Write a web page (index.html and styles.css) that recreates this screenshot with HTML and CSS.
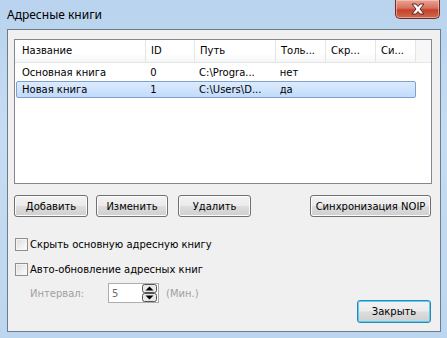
FILE: index.html
```html
<!DOCTYPE html>
<html>
<head>
<meta charset="utf-8">
<link rel="stylesheet" href="styles.css">
</head>
<body>
<div class="window">
  <div class="titlebar">
    <div class="title">Адресные книги</div>
    <div class="close">
      <svg width="18" height="12" viewBox="0 0 18 12"><path d="M3 1 L7 1 L9 3.5 L11 1 L15 1 L11 6 L15 11 L11 11 L9 8.5 L7 11 L3 11 L7 6 Z" fill="#fff" stroke="#5a2a26" stroke-width="1" stroke-linejoin="round"/></svg>
    </div>
  </div>
  <div class="client">
    <div class="listview">
      <div class="lv-row lv-header">
        <div class="c c1">Название</div>
        <div class="c c2">ID</div>
        <div class="c c3">Путь</div>
        <div class="c c4">Толь...</div>
        <div class="c c5">Скр...</div>
        <div class="c c6">Си...</div>
        <div class="c c7"></div>
      </div>
      <div class="lv-row item">
        <div class="c c1">Основная книга</div>
        <div class="c c2">0</div>
        <div class="c c3">C:\Progra...</div>
        <div class="c c4">нет</div>
        <div class="c c5"></div>
        <div class="c c6"></div>
      </div>
      <div class="lv-row item selected">
        <div class="c c1">Новая книга</div>
        <div class="c c2">1</div>
        <div class="c c3">C:\Users\D...</div>
        <div class="c c4">да</div>
        <div class="c c5"></div>
        <div class="c c6"></div>
      </div>
    </div>
    <div class="buttons">
      <button class="btn b-add">Добавить</button>
      <button class="btn b-edit">Изменить</button>
      <button class="btn b-del">Удалить</button>
      <button class="btn b-sync">Синхронизация NOIP</button>
    </div>
    <label class="check chk1"><span class="box"></span>Скрыть основную адресную книгу</label>
    <label class="check chk2"><span class="box"></span>Авто-обновление адресных книг</label>
    <div class="interval">
      <span class="lbl">Интервал:</span>
      <div class="spin">
        <span class="val">5</span>
        <svg class="arrows" width="15" height="18" viewBox="0 0 15 18">
          <rect x="0.5" y="0.5" width="14" height="8" rx="2" fill="#e8e8e8" stroke="#555"/>
          <rect x="0.5" y="9.5" width="14" height="8" rx="2" fill="#e8e8e8" stroke="#555"/>
          <path d="M3.5 6.5 L7.5 2.5 L11.5 6.5 Z" fill="#000"/>
          <path d="M3.5 11.5 L11.5 11.5 L7.5 15.5 Z" fill="#000"/>
        </svg>
      </div>
      <span class="unit">(Мин.)</span>
    </div>
    <div class="footer">
      <button class="btn default">Закрыть</button>
    </div>
  </div>
</div>
</body>
</html>
```
FILE: styles.css
```css
html, body {
  margin: 0;
  padding: 0;
}
body {
  width: 447px;
  height: 338px;
  overflow: hidden;
  font-family: "DejaVu Sans", Verdana, sans-serif;
  font-size: 10px;
  color: #000;
}
.window {
  width: 447px;
  height: 338px;
  background: linear-gradient(180deg, #b9d3ee 0%, #c6dcf2 40%, #bdd6ef 100%);
  display: flex;
  flex-direction: column;
}
.titlebar {
  height: 29px;
  display: flex;
  justify-content: space-between;
  align-items: flex-start;
}
.title {
  font-family: "Noto Sans", "DejaVu Sans", sans-serif;
  font-size: 12px;
  margin: 6px 0 0 7px;
  color: #000;
}
.close {
  width: 45px;
  height: 19px;
  margin-right: 7px;
  box-sizing: border-box;
  border: 1px solid #6a2d27;
  border-top: none;
  border-radius: 0 0 5px 5px;
  background: linear-gradient(180deg, #e8a595 0%, #d9705c 45%, #c4422c 55%, #cf6a4c 100%);
  box-shadow: inset 0 0 0 1px rgba(255,220,210,0.5);
  display: flex;
  align-items: center;
  justify-content: center;
}
.client {
  margin: 0 6px 0 7px;
  height: 303px;
  box-sizing: border-box;
  border: 1px solid #6e7c8a;
  background: #f0f0f0;
  padding: 9px 9px 0 6px;
  display: flex;
  flex-direction: column;
}
.listview {
  width: 418px;
  height: 145px;
  box-sizing: border-box;
  border: 1px solid #828790;
  background: #fff;
}
.lv-row {
  display: flex;
}
.c {
  box-sizing: border-box;
  padding-left: 5px;
  white-space: nowrap;
  overflow: hidden;
}
.c1 { width: 131px; padding-left: 7px; }
.c2 { width: 49px; }
.c3 { width: 81px; }
.c4 { width: 50px; }
.c5 { width: 50px; }
.c6 { width: 40px; }
.c7 { flex: 1; }
.lv-header {
  height: 23px;
  align-items: stretch;
  margin-bottom: 1px;
}
.lv-header .c {
  line-height: 22px;
  border-right: 1px solid #e5e5e5;
  border-bottom: 1px solid #e5e5e5;
  background: linear-gradient(180deg, #fff 0%, #fff 60%, #f5f6f7 100%);
}
.lv-header .c7 {
  border-right: none;
  background: #f7f7f7;
}
.item {
  height: 17px;
  line-height: 16px;
  margin-left: 1px;
  width: 400px;
  box-sizing: border-box;
  border: 1px solid transparent;
  border-radius: 2px;
}
.item .c1 { width: 130px; padding-left: 5px; }
.item .c2 { padding-left: 4px; }
.item .c3 { padding-left: 4px; }
.item .c4 { padding-left: 4px; }
.selected {
  border-color: #7da2ce;
  background: linear-gradient(180deg, #dcebfc 0%, #c1dbfc 100%);
}
.buttons {
  display: flex;
  margin-top: 11px;
  height: 22px;
}
.btn {
  font-family: "DejaVu Sans", Verdana, sans-serif;
  font-size: 10px;
  white-space: nowrap;
  color: #000;
  height: 22px;
  box-sizing: border-box;
  border: 1px solid #707070;
  border-radius: 3px;
  background: linear-gradient(180deg, #f2f2f2 0%, #ebebeb 48%, #dddddd 52%, #cfcfcf 100%);
  box-shadow: inset 0 0 0 1px #fcfcfc;
  padding: 0;
}
.b-add { width: 74px; }
.b-edit { width: 72px; margin-left: 8px; }
.b-del { width: 73px; margin-left: 10px; }
.b-sync { width: 121px; margin-left: auto; }
.check {
  display: flex;
  align-items: center;
  height: 14px;
}
.chk1 { margin-top: 20px; }
.chk2 { margin-top: 11px; }
.box {
  width: 13px;
  height: 13px;
  box-sizing: border-box;
  border: 1px solid #8e8f8f;
  background: linear-gradient(135deg, #dcdcdc 0%, #f0f0f0 60%, #fff 100%);
  box-shadow: inset 0 0 0 1px #f4f4f4;
  margin: 0 2px 0 1px;
  flex: none;
}
.interval {
  display: flex;
  align-items: center;
  margin-top: 7px;
  height: 20px;
  color: #a0a0a0;
}
.lbl { margin-left: 16px; width: 78px; }
.spin {
  width: 51px;
  height: 20px;
  box-sizing: border-box;
  border: 1px solid #abadb3;
  background: #fff;
  display: flex;
  align-items: center;
  justify-content: space-between;
  padding: 0 1px 0 3px;
}
.val { color: #6d6d6d; }
.arrows { display: block; }
.unit { margin-left: 7px; }
.footer {
  display: flex;
  justify-content: flex-end;
  margin-top: -3px;
}
.default {
  width: 74px;
  height: 23px;
  border-color: #3c7fb1;
  box-shadow: inset 0 0 0 1px #48d8fb;
}
```
